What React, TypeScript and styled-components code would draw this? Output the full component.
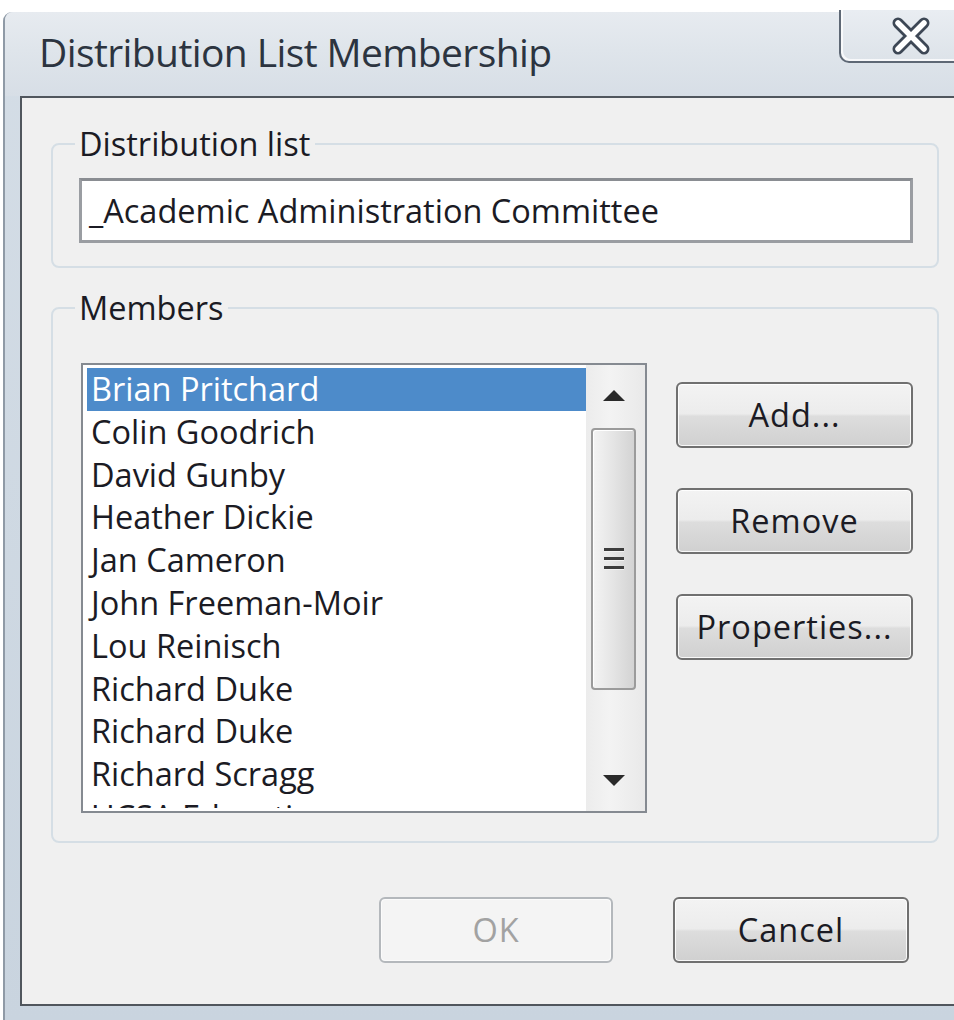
import React from "react";
import styled, { createGlobalStyle } from "styled-components";

const Global = createGlobalStyle`
  html, body {
    margin: 0;
    padding: 0;
    background: #ffffff;
    overflow: hidden;
  }
  body {
    font-family: "Open Sans", "Noto Sans", "Liberation Sans", sans-serif;
  }
`;

const Window = styled.div`
  margin: 12px 0 0 3px;
  width: 978px;
  height: 1008px;
  display: flex;
  flex-direction: column;
  background: linear-gradient(180deg, #d4dde6 0%, #c9d4df 100%);
  border-left: 2px solid #8f9aa6;
  border-top-left-radius: 9px;
  box-sizing: border-box;
`;

const TitleBar = styled.div`
  height: 84px;
  flex: none;
  display: flex;
  align-items: flex-start;
  padding-left: 34px;
  background: linear-gradient(180deg, #e7ebf0 0%, #dfe5eb 45%, #d7dee6 100%);
  border-top-left-radius: 8px;
`;

const Title = styled.div`
  margin-top: 13px;
  font-size: 39px;
  line-height: 53px;
  color: #2c3440;
  letter-spacing: -0.6px;
  white-space: nowrap;
`;

const CloseButton = styled.div`
  margin-left: auto;
  margin-top: -2px;
  width: 142px;
  height: 53px;
  display: flex;
  align-items: center;
  justify-content: center;
  border: 2px solid #5e6875;
  border-top: none;
  border-right: none;
  border-bottom-left-radius: 10px;
  background: linear-gradient(180deg, #e9edf2 0%, #dde3e9 100%);
  box-shadow: inset 2px -2px 0 rgba(255, 255, 255, 0.75);
  box-sizing: border-box;
`;

const ClientWrap = styled.div`
  flex: 1;
  padding: 0 0 14px 15px;
  display: flex;
`;

const Client = styled.div`
  flex: 1;
  background: #f0f0f0;
  border: 2px solid #50565d;
  border-right: none;
  display: flex;
  flex-direction: column;
  color: #1b1b24;
  font-size: 32.5px;
`;

const Group = styled.fieldset<{ $top: number; $bottom: number }>`
  margin: ${(p) => p.$top}px 0 0 29px;
  width: 888px;
  box-sizing: border-box;
  border: 2px solid #d5dee5;
  border-radius: 8px;
  padding: 0 0 ${(p) => p.$bottom}px 0;
  min-width: 0;
`;

const Legend = styled.legend`
  margin-left: 22px;
  padding: 0 5px 0 4px;
  line-height: 44px;
  font-size: 32.5px;
  color: #1b1b24;
`;

const TextBox = styled.div`
  margin: 12px 0 0 26px;
  width: 834px;
  height: 65px;
  box-sizing: border-box;
  border: 3px solid #9a9da2;
  border-top-color: #8a8d92;
  background: #ffffff;
  padding-left: 7px;
  display: flex;
  align-items: center;
  line-height: 44px;
  white-space: nowrap;
`;

const MembersBody = styled.div`
  margin: 33px 0 0 28px;
  display: flex;
  align-items: flex-start;
`;

const ListBox = styled.div`
  width: 566px;
  height: 450px;
  box-sizing: border-box;
  border: 2px solid #858a91;
  background: #ffffff;
  display: flex;
  align-items: flex-start;
  overflow: hidden;
`;

const Items = styled.div`
  flex: 1;
  height: 443px;
  box-sizing: border-box;
  padding: 3px 0 0 4px;
  overflow: hidden;
`;

const Row = styled.div<{ $selected?: boolean }>`
  height: 42.8px;
  line-height: 42.5px;
  padding-left: 4px;
  white-space: nowrap;
  background: ${(p) => (p.$selected ? "#4d8bca" : "transparent")};
  color: ${(p) => (p.$selected ? "#ffffff" : "#1b1b24")};
`;

const ScrollBar = styled.div`
  width: 59px;
  height: 446px;
  flex: none;
  display: flex;
  flex-direction: column;
  background: linear-gradient(90deg, #ececec 0%, #f3f3f3 40%, #e9e9e9 100%);
`;

const ArrowBox = styled.div`
  height: 60px;
  flex: none;
  display: flex;
  align-items: center;
  justify-content: center;
  padding-right: 4px;
`;

const Thumb = styled.div`
  margin: 3px 9px 0 5px;
  height: 262px;
  flex: none;
  box-sizing: border-box;
  border: 2px solid #9b9b9b;
  border-radius: 4px;
  background: linear-gradient(90deg, #f4f4f4 0%, #e6e6e6 45%, #d3d3d3 100%);
  box-shadow: inset 1px 1px 0 #ffffff;
  display: flex;
  flex-direction: column;
  align-items: center;
  justify-content: center;
  gap: 5px;
`;

const Grip = styled.div`
  width: 20px;
  height: 3px;
  background: #3c3c3c;
  border-bottom: 1px solid #f2f2f2;
`;

const Spacer = styled.div`
  flex: 1;
`;

const SideButtons = styled.div`
  margin: 19px 0 0 29px;
  display: flex;
  flex-direction: column;
  gap: 40px;
`;

const Button = styled.div<{ $w: number; $disabled?: boolean }>`
  width: ${(p) => p.$w}px;
  height: 66px;
  box-sizing: border-box;
  border: 2px solid ${(p) => (p.$disabled ? "#b4b8bc" : "#707070")};
  border-radius: 6px;
  display: flex;
  align-items: center;
  justify-content: center;
  line-height: 44px;
  letter-spacing: 1px;
  white-space: nowrap;
  color: ${(p) => (p.$disabled ? "#a2a2a2" : "#1b1b24")};
  background: ${(p) =>
    p.$disabled
      ? "#f4f4f4"
      : "linear-gradient(180deg, #f3f3f3 0%, #ececec 48%, #dddddd 52%, #d0d0d0 100%)"};
  box-shadow: inset 0 0 0 1px ${(p) => (p.$disabled ? "#fbfbfb" : "rgba(255,255,255,0.85)")};
`;

const Footer = styled.div`
  margin: 54px 0 0 29px;
  width: 888px;
  box-sizing: border-box;
  padding-right: 30px;
  display: flex;
  justify-content: flex-end;
  gap: 60px;
`;

const CloseGlyph = () => (
  <svg width="44" height="40" viewBox="0 0 44 40">
    <path d="M9 7 L35 33 M35 7 L9 33" stroke="#3d4755" strokeWidth="11" strokeLinecap="round" fill="none" />
    <path d="M9 7 L35 33 M35 7 L9 33" stroke="#ffffff" strokeWidth="5.5" strokeLinecap="round" fill="none" />
  </svg>
);

const UpArrow = () => (
  <svg width="24" height="14" viewBox="0 0 24 14">
    <path d="M1 13 L12 2 L23 13 Z" fill="#2a2a2a" />
  </svg>
);

const DownArrow = () => (
  <svg width="24" height="14" viewBox="0 0 24 14">
    <path d="M1 1 L12 12 L23 1 Z" fill="#2a2a2a" />
  </svg>
);

const members = [
  "Brian Pritchard",
  "Colin Goodrich",
  "David Gunby",
  "Heather Dickie",
  "Jan Cameron",
  "John Freeman-Moir",
  "Lou Reinisch",
  "Richard Duke",
  "Richard Duke",
  "Richard Scragg",
  "UCSA Education",
];

export default function App() {
  return (
    <>
      <Global />
      <Window>
        <TitleBar>
          <Title>Distribution List Membership</Title>
          <CloseButton>
            <CloseGlyph />
          </CloseButton>
        </TitleBar>
        <ClientWrap>
          <Client>
            <Group $top={24} $bottom={23}>
              <Legend>Distribution list</Legend>
              <TextBox>_Academic Administration Committee</TextBox>
            </Group>
            <Group $top={18} $bottom={28}>
              <Legend>Members</Legend>
              <MembersBody>
                <ListBox>
                  <Items>
                    {members.map((m, i) => (
                      <Row key={i} $selected={i === 0}>
                        {m}
                      </Row>
                    ))}
                  </Items>
                  <ScrollBar>
                    <ArrowBox>
                      <UpArrow />
                    </ArrowBox>
                    <Thumb>
                      <Grip />
                      <Grip />
                      <Grip />
                    </Thumb>
                    <Spacer />
                    <ArrowBox>
                      <DownArrow />
                    </ArrowBox>
                  </ScrollBar>
                </ListBox>
                <SideButtons>
                  <Button $w={237}>Add...</Button>
                  <Button $w={237}>Remove</Button>
                  <Button $w={237}>Properties...</Button>
                </SideButtons>
              </MembersBody>
            </Group>
            <Footer>
              <Button $w={234} $disabled>
                OK
              </Button>
              <Button $w={236}>Cancel</Button>
            </Footer>
          </Client>
        </ClientWrap>
      </Window>
    </>
  );
}
